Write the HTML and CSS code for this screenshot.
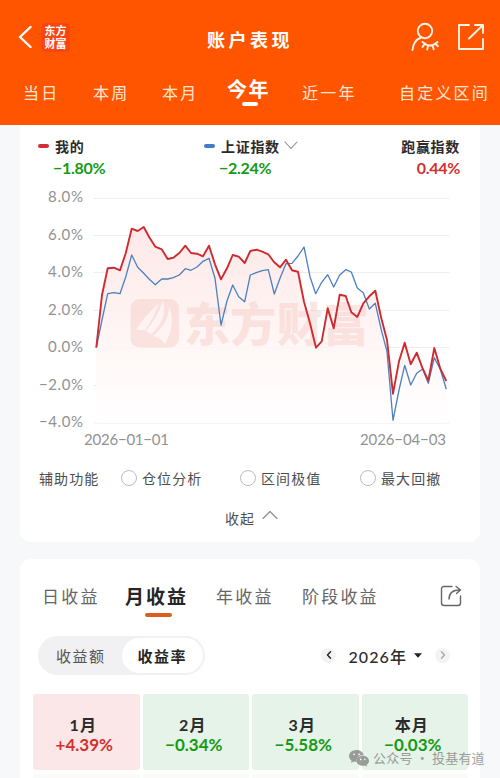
FILE: index.html
```html
<!DOCTYPE html>
<html lang="zh-CN">
<head>
    <meta charset="UTF-8">
    <meta name="viewport" content="width=device-width, initial-scale=1.0">
    <title>账户表现</title>
    <link rel="stylesheet" href="styles.css">
</head>
<body>
    <header>
        <div class="titleBar">
            <svg class="backIcon" width="14" height="24" viewBox="0 0 14 24"><path d="M12.500 2 2 12 12.500 22"/></svg>
            <div class="logo">东方<br>财富</div>
            <h1>账户表现</h1>
            <svg class="headIcon userIcon" width="30" height="30" viewBox="0 0 30 30">
                <circle cx="15" cy="9" r="7.2"/>
                <path d="M2.500 28C3 22 6 17.500 11 15.500M12.500 20Q20 27 27.500 20M14.500 22l-2 3M18 24l-.8 3.500M22.500 23.800l1.200 3.500M25.500 22l2.500 2.200"/>
            </svg>
            <svg class="headIcon" width="28" height="28" viewBox="0 0 28 28">
                <path d="M12 2H2V26H26V16M12 15.500 26 2M18 2H26V10"/>
            </svg>
        </div>
        <nav class="rangeTabs">
            <span>当日</span>
            <span>本周</span>
            <span>本月</span>
            <span class="on">今年</span>
            <span>近一年</span>
            <span>自定义区间</span>
        </nav>
    </header>
    <main>
        <section class="card chartCard">
            <div class="legend">
                <div class="legendItem">
                    <p class="name"><i class="dash red"></i>我的</p>
                    <p class="num down">−1.80%</p>
                </div>
                <div class="legendItem">
                    <p class="name"><i class="dash blue"></i>上证指数<svg class="chevron" width="14" height="9" viewBox="0 0 14 9"><path d="M1 1 7 7.500 13 1"/></svg></p>
                    <p class="num down">−2.24%</p>
                </div>
                <div class="legendItem last">
                    <p class="name">跑赢指数</p>
                    <p class="num up">0.44%</p>
                </div>
            </div>
            <svg class="chart" width="460" height="270" viewBox="20 185 460 270">
                <defs>
                    <linearGradient id="area" x1="0" y1="227" x2="0" y2="423" gradientUnits="userSpaceOnUse">
                        <stop offset="0" stop-color="#fde4e2"/>
                        <stop offset=".55" stop-color="#fef4f3"/>
                        <stop offset="1" stop-color="#ffffff"/>
                    </linearGradient>
                </defs>
                <path class="grid" d="M94 198.500H449M94 235.500H449M94 272.500H449M94 310.500H449M94 347.500H449M94 385.500H449M94 423H449"/>
                <path fill="url(#area)" fill-opacity=".85" d="M96.300 347.500 102 295 107.700 268.300 114 267.700 120 270.300 125.700 253.300 131.700 228.700 137.700 231 143.700 227 149.300 237.300 155.300 246.700 161.700 249.300 167.700 259 173.300 257.700 179.300 253 185.300 245.700 191 253 197 253.700 203 256.300 209 245.700 215 264.300 221 279.300 227 268.300 232.700 255 238.700 256.700 244.700 263 250.300 251 256.700 249.700 262.300 251.700 268.300 254.300 274 262 280 267.300 286 259.700 292 270.300 298 271.700 304 301.700 310 323.300 316 347.700 321.700 341.300 327.700 308.300 333.700 328.300 339.700 294.700 345.700 296 351.300 312.300 357.300 317 363.300 303.300 369.300 296.300 375.300 290.700 381.300 318.300 387 340 393 393.700 399 361.300 404.700 342.700 410.700 364.300 416.700 352.700 422.300 367.700 428.300 380.700 434.300 348 440.300 368.700 446.300 381V423H96.300Z"/>
                <g class="mark">
                    <rect x="130.500" y="299" width="48.500" height="48.500" rx="9"/>
                    <path class="feather" d="M136 330Q142 319 159 303Q154 318 145 330ZM146 331Q157 318 163 301Q168 319 151 334ZM153 336Q169 323 169 306Q176 325 165 344Q160 337 153 336Z"/>
                    <text x="184" y="341" textLength="185">东方财富</text>
                </g>
                <polyline class="line indexLine" points="96.300,347.500 102,320 107.700,293.700 114,292.700 120,293.700 125.700,277 131.700,255 137.700,267.300 143.700,273.300 149.300,279.300 155.300,284.700 161.700,279 167.700,279 173.300,277.700 179.300,275 185.300,268.700 191,270.300 197,267 203,261.300 209,258.300 215,278.300 221,325 227,301 232.700,285 238.700,296.700 244.700,301.700 250.300,275 257,272.300 262.300,270.700 268.300,269.700 274.300,294 280,278.300 286,263.700 292,263.300 298,256 304,247 310,276.700 315.700,293.700 321.700,282.300 327.700,274.700 333.700,287 339.700,275 345.700,269.700 351.300,272 357.300,288 363.300,292.700 369.300,309 375.300,303.300 381.300,330 387,351.700 393,420.300 399,390 404.700,365.300 410.700,385 416.700,373.300 422.700,369 428.300,383.300 434.300,357.700 440.300,369.300 446.300,389.300"/>
                <polyline class="line mineLine" points="96.300,347.500 102,295 107.700,268.300 114,267.700 120,270.300 125.700,253.300 131.700,228.700 137.700,231 143.700,227 149.300,237.300 155.300,246.700 161.700,249.300 167.700,259 173.300,257.700 179.300,253 185.300,245.700 191,253 197,253.700 203,256.300 209,245.700 215,264.300 221,279.300 227,268.300 232.700,255 238.700,256.700 244.700,263 250.300,251 256.700,249.700 262.300,251.700 268.300,254.300 274,262 280,267.300 286,259.700 292,270.300 298,271.700 304,301.700 310,323.300 316,347.700 321.700,341.300 327.700,308.300 333.700,328.300 339.700,294.700 345.700,296 351.300,312.300 357.300,317 363.300,303.300 369.300,296.300 375.300,290.700 381.300,318.300 387,340 393,393.700 399,361.300 404.700,342.700 410.700,364.300 416.700,352.700 422.300,367.700 428.300,380.700 434.300,348 440.300,368.700 446.300,381"/>
                <g class="axis">
                    <text x="48" y="202" textLength="35">8.0%</text>
                    <text x="48" y="239.500" textLength="35">6.0%</text>
                    <text x="48" y="277" textLength="35">4.0%</text>
                    <text x="48" y="314.500" textLength="35">2.0%</text>
                    <text x="48" y="352" textLength="35">0.0%</text>
                    <text x="39" y="389.500" textLength="44">−2.0%</text>
                    <text x="39" y="427" textLength="44">−4.0%</text>
                    <text x="84" y="444.500" textLength="85">2026−01−01</text>
                    <text x="360" y="444.500" textLength="86">2026−04−03</text>
                </g>
            </svg>
            <div class="tools">
                <span>辅助功能</span>
                <label><i></i>仓位分析</label>
                <label><i></i>区间极值</label>
                <label><i></i>最大回撤</label>
            </div>
            <div class="fold">收起<svg class="chevron" width="16" height="10" viewBox="0 0 16 10"><path d="M1 8.500 8 1.500 15 8.500"/></svg></div>
        </section>
        <section class="card profitCard">
            <div class="profitTabs">
                <span>日收益</span>
                <span class="on">月收益</span>
                <span>年收益</span>
                <span>阶段收益</span>
                <svg class="shareIcon" width="22" height="22" viewBox="0 0 22 22">
                    <path d="M12 1.500H4Q1.500 1.500 1.500 4V18Q1.500 20.500 4 20.500H18Q20.500 20.500 20.500 18V11M9 14C9 8 13 5 20 5M16 1.500 20.500 5 16.500 8.500"/>
                </svg>
            </div>
            <div class="filterRow">
                <div class="switch">
                    <span>收益额</span>
                    <span class="on">收益率</span>
                </div>
                <div class="yearPick">
                    <i class="arrow"><svg width="6" height="8" viewBox="0 0 6 8"><path d="M4.500 .8 1.500 4 4.500 7.200"/></svg></i>
                    <span class="year">2026年</span>
                    <svg class="caret" width="8" height="5" viewBox="0 0 8 5"><path d="M0 .3H8L4 4.800Z"/></svg>
                    <i class="arrow next"><svg width="6" height="8" viewBox="0 0 6 8"><path d="M1.500 .8 4.500 4 1.500 7.200"/></svg></i>
                </div>
            </div>
            <div class="months">
                <div class="month gain"><b>1月</b><p class="num up">+4.39%</p></div>
                <div class="month"><b>2月</b><p class="num down">−0.34%</p></div>
                <div class="month"><b>3月</b><p class="num down">−5.58%</p></div>
                <div class="month"><b>本月</b><p class="num down">−0.03%</p></div>
            </div>
            <div class="nextRow"><i class="gain"></i><i></i><i></i><i></i></div>
        </section>
    </main>
    <div class="account">
        <svg width="20" height="17" viewBox="0 0 20 17">
            <path d="M7.500 0C3.200 0 0 2.800 0 6.100c0 1.900 1 3.500 2.700 4.600L2 13l2.700-1.400c.9.300 1.800.4 2.800.4C7 8 10 5 14.700 5 14 2 11 0 7.500 0Z"/>
            <path d="M13.700 5.800c-3.500 0-6.200 2.200-6.200 5s2.700 5 6.200 5c.8 0 1.500-.1 2.200-.3l2.300 1.200-.6-1.900c1.500-.9 2.400-2.300 2.400-4 0-2.800-2.800-5-6.300-5Z"/>
            <g fill="#fff"><circle cx="5" cy="4.300" r=".9"/><circle cx="10" cy="4.300" r=".9"/><circle cx="11.700" cy="9.400" r=".8"/><circle cx="15.800" cy="9.400" r=".8"/></g>
        </svg>
        公众号 · 投基有道
    </div>
</body>
</html>
```
FILE: styles.css
```css
*{
    margin: 0; padding: 0;
    box-sizing: border-box;
}
body{
    width: 500px;
    height: 778px;
    overflow: hidden;
    position: relative;
    background-color: #f6f8fa;
    color: #2b2b2b;
    font-family: Lato, "Noto Sans CJK SC", sans-serif;
}
svg{
    display: block;
    flex: none;
}
svg path, svg circle{
    stroke-linecap: round;
    stroke-linejoin: round;
}
header{
    height: 125px;
    background-color: #ff5500;
    color: #fff;
}
.titleBar{
    height: 74px;
    padding: 0 15px 0 18px;
    display: flex;
    align-items: center;
}
.backIcon{
    fill: none;
    stroke: #fff;
    stroke-width: 2.4;
}
.logo{
    width: 29px;
    height: 29px;
    margin-left: 9px;
    border-radius: 5px;
    background-color: #fb4511;
    font-size: 11px;
    line-height: 13px;
    padding-top: 1px;
    font-weight: 700;
    text-align: center;
}
h1{
    flex: 1;
    margin-left: 137px;
    padding-top: 5px;
    font-size: 18px;
    line-height: 24px;
    letter-spacing: 3.5px;
    font-weight: 700;
}
.headIcon{
    fill: none;
    stroke: #fff3e6;
    stroke-width: 1.9;
}
.userIcon{
    margin-right: 17px;
}
.rangeTabs{
    height: 51px;
    padding-left: 23px;
    display: grid;
    grid-template-columns: 70px 69px 65px 75px 97px auto;
    color: #ffe6d2;
    font-size: 16px;
    line-height: 38px;
    letter-spacing: 2.2px;
    white-space: nowrap;
}
.rangeTabs .on{
    color: #fff;
    font-size: 20px;
    line-height: 30px;
    letter-spacing: 1.5px;
    font-weight: 700;
}
.rangeTabs .on::after{
    content: "";
    display: block;
    width: 16px;
    height: 4px;
    margin: -2px 0 0 15px;
    border-radius: 2px;
    background-color: #fff;
}
.card{
    width: 460px;
    margin: 0 auto;
    background-color: #fff;
}
.chartCard{
    height: 417px;
    border-radius: 0 0 11px 11px;
}
.legend{
    height: 60px;
    padding: 9px 20px 0 18px;
    display: grid;
    grid-template-columns: 166px 150px 1fr;
}
.name{
    display: flex;
    align-items: center;
    height: 23px;
    font-size: 14px;
    letter-spacing: .7px;
    font-weight: 700;
}
.dash{
    width: 11px;
    height: 4px;
    margin-right: 6px;
    border-radius: 2px;
}
.dash.red{
    background-color: #ce3036;
}
.dash.blue{
    background-color: #437bc7;
}
.chevron{
    margin-left: 4px;
    fill: none;
    stroke: #8b8b8b;
    stroke-width: 1.1;
}
.num{
    font-size: 16px;
    line-height: 20px;
    font-weight: 700;
}
.legend .num{
    padding-left: 15px;
    line-height: 22px;
    letter-spacing: -.3px;
}
.last{
    text-align: right;
}
.last .name{
    justify-content: flex-end;
}
.up{
    color: #d3302f;
}
.down{
    color: #159a15;
}
.grid{
    fill: none;
    stroke: #eeeeef;
    stroke-width: 1;
}
.mark{
    fill: #f6cbc4;
    opacity: .45;
    font-size: 46px;
    font-weight: 900;
}
.feather{
    fill: #fff3f1;
}
.line{
    fill: none;
    stroke-linejoin: round;
}
.mineLine{
    stroke: #ce2b31;
    stroke-width: 1.9;
}
.indexLine{
    stroke: #4c80c0;
    stroke-width: 1.3;
}
.axis{
    fill: #929292;
    font-size: 15px;
}
.tools{
    height: 46px;
    padding-left: 19px;
    display: grid;
    grid-template-columns: 82px 119px 120px auto;
    align-items: center;
    color: #4e4e4e;
    font-size: 14px;
    letter-spacing: 1.1px;
}
.tools label{
    display: flex;
    align-items: center;
}
.tools i{
    width: 16px;
    height: 16px;
    margin-right: 5px;
    border: 1px solid #bdbdbd;
    border-radius: 50%;
}
.fold{
    height: 34px;
    display: flex;
    align-items: center;
    padding-left: 205px;
    color: #4e4e4e;
    font-size: 14px;
    letter-spacing: 1px;
}
.fold .chevron{
    margin: -6px 0 0 7px;
}
.profitCard{
    height: 240px;
    margin-top: 17px;
    border-radius: 11px;
}
.profitTabs{
    height: 76px;
    padding: 21px 0 0 22px;
    display: grid;
    grid-template-columns: 83px 91px 86px 138px auto;
    color: #666;
    font-size: 17px;
    line-height: 33px;
    letter-spacing: 2.2px;
}
.profitTabs .on{
    color: #262626;
    font-size: 19px;
    font-weight: 700;
    letter-spacing: 2px;
}
.profitTabs .on::after{
    content: "";
    display: block;
    width: 27px;
    height: 4px;
    margin-left: 20px;
    border-radius: 2px;
    background-color: #dd5c20;
}
.shareIcon{
    margin-top: 5px;
    fill: none;
    stroke: #666;
    stroke-width: 1.4;
}
.filterRow{
    height: 40px;
    padding: 0 30px 0 18px;
    display: flex;
    justify-content: space-between;
    align-items: center;
}
.switch{
    width: 167px;
    height: 39px;
    padding: 2px;
    display: flex;
    border-radius: 20px;
    background-color: #f1f1f3;
    color: #555;
    font-size: 15px;
    line-height: 36px;
    letter-spacing: 1.5px;
}
.switch span{
    flex: 1;
    text-align: center;
}
.switch .on{
    border-radius: 18px;
    background-color: #fff;
    color: #262626;
    font-weight: 700;
}
.yearPick{
    display: flex;
    align-items: center;
}
.arrow{
    width: 15px;
    height: 15px;
    display: flex;
    align-items: center;
    justify-content: center;
    border-radius: 50%;
    background-color: #f3f3f3;
}
.arrow svg{
    fill: none;
    stroke: #222;
    stroke-width: 1.4;
}
.next svg{
    stroke: #aaa;
}
.year{
    margin: 2px 7px 0 12px;
    font-size: 16px;
    font-weight: 500;
    letter-spacing: 1.1px;
}
.caret{
    margin-right: 13px;
    fill: #222;
}
.months{
    padding: 19px 12px 0 13px;
    display: grid;
    grid-template-columns: repeat(4, 1fr);
    gap: 3px;
}
.month{
    height: 76px;
    padding-top: 20px;
    border-radius: 3px;
    background-color: #e6f3e8;
    text-align: center;
}
.month.gain{
    background-color: #fce7e8;
}
.month b{
    display: block;
    padding-right: 6px;
    font-size: 16px;
    line-height: 22px;
    letter-spacing: 1px;
}
.month .num{
    padding-right: 4px;
    font-size: 17px;
    line-height: 17px;
}
.nextRow{
    padding: 4px 12px 0 13px;
    display: grid;
    grid-template-columns: repeat(4, 1fr);
    gap: 3px;
}
.nextRow i{
    height: 10px;
    border-radius: 3px;
    background-color: #fafafa;
}
/* 浮在月份卡片上的公众号署名 */
.account{
    position: absolute;
    left: 349px;
    top: 747px;
    display: flex;
    align-items: center;
    gap: 4px;
    color: #777;
    opacity: .7;
    font-family: "Noto Sans CJK SC", sans-serif;
    font-size: 13px;
    line-height: 22px;
    letter-spacing: .2px;
    white-space: nowrap;
}
.account svg{
    fill: #777;
}
```
